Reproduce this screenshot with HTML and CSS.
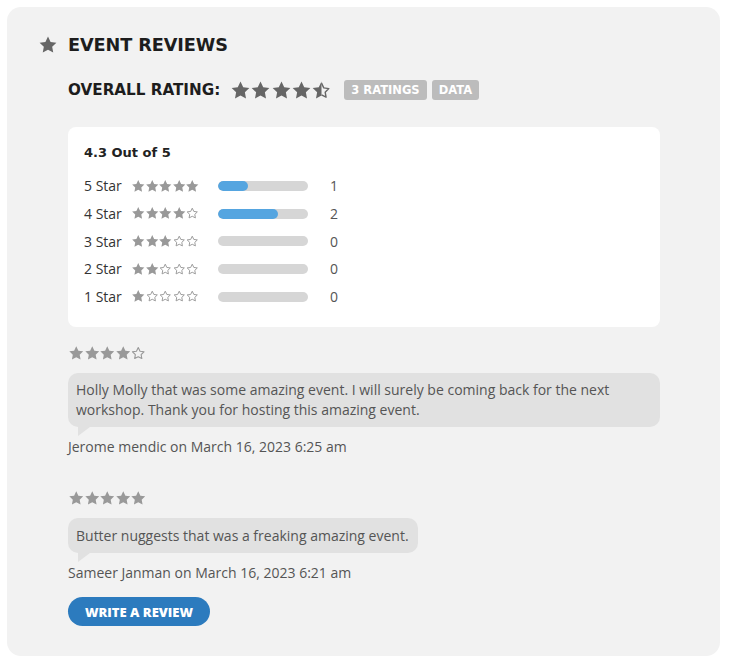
FILE: index.html
```html
<!DOCTYPE html>
<html lang="en">
<head>
  <meta charset="UTF-8" />
  <title>Event Reviews</title>
  <link rel="stylesheet" href="styles.css">
</head>
<body>
  <svg class="defs" width="0" height="0">
    <defs>
      <symbol id="star" viewBox="0 0 24 24">
        <path d="M12 1.8l3.1 6.5 7 .9-5.1 4.9 1.3 7L12 17.7l-6.3 3.4 1.3-7L1.9 9.2l7-.9z" stroke-linejoin="round"/>
      </symbol>
      <symbol id="star-o" viewBox="0 0 24 24">
        <path d="M12 3.6l2.6 5.4 5.8.8-4.2 4.1 1 5.8L12 17l-5.2 2.7 1-5.8-4.2-4.1 5.8-.8z" fill="none" stroke="currentColor" stroke-width="1.6" stroke-linejoin="round"/>
      </symbol>
      <symbol id="star-half" viewBox="0 0 24 24">
        <path d="M12 1.8v15.9l-6.3 3.4 1.3-7L1.9 9.2l7-.9z"/>
        <path d="M12 3.6l2.6 5.4 5.8.8-4.2 4.1 1 5.8L12 17" fill="none" stroke="currentColor" stroke-width="1.6" stroke-linejoin="round"/>
      </symbol>
    </defs>
  </svg>

  <div class="reviews-panel">
    <!-- Heading -->
    <div class="reviews-head">
      <svg class="head-icon"><use href="#star"/></svg>
      <h2>Event Reviews</h2>
    </div>

    <div class="reviews-body">
      <div class="overall">
        <span class="overall-label">Overall Rating:</span>
        <span class="stars stars-big">
          <svg><use href="#star"/></svg><svg><use href="#star"/></svg><svg><use href="#star"/></svg><svg><use href="#star"/></svg><svg><use href="#star-half"/></svg>
        </span>
        <span class="badge">3 Ratings</span>
        <span class="badge">Data</span>
      </div>

      <!-- Summary card -->
      <div class="summary-card">
        <div class="summary-title">4.3 Out of 5</div>
        <div class="summary-rows">
          <div class="summary-row">
            <span class="row-label">5 Star</span>
            <span class="stars stars-tiny"><svg><use href="#star"/></svg><svg><use href="#star"/></svg><svg><use href="#star"/></svg><svg><use href="#star"/></svg><svg><use href="#star"/></svg></span>
            <span class="bar"><span class="bar-fill" style="width: 33%"></span></span>
            <span class="row-count">1</span>
          </div>
          <div class="summary-row">
            <span class="row-label">4 Star</span>
            <span class="stars stars-tiny"><svg><use href="#star"/></svg><svg><use href="#star"/></svg><svg><use href="#star"/></svg><svg><use href="#star"/></svg><svg><use href="#star-o"/></svg></span>
            <span class="bar"><span class="bar-fill" style="width: 67%"></span></span>
            <span class="row-count">2</span>
          </div>
          <div class="summary-row">
            <span class="row-label">3 Star</span>
            <span class="stars stars-tiny"><svg><use href="#star"/></svg><svg><use href="#star"/></svg><svg><use href="#star"/></svg><svg><use href="#star-o"/></svg><svg><use href="#star-o"/></svg></span>
            <span class="bar"></span>
            <span class="row-count">0</span>
          </div>
          <div class="summary-row">
            <span class="row-label">2 Star</span>
            <span class="stars stars-tiny"><svg><use href="#star"/></svg><svg><use href="#star"/></svg><svg><use href="#star-o"/></svg><svg><use href="#star-o"/></svg><svg><use href="#star-o"/></svg></span>
            <span class="bar"></span>
            <span class="row-count">0</span>
          </div>
          <div class="summary-row">
            <span class="row-label">1 Star</span>
            <span class="stars stars-tiny"><svg><use href="#star"/></svg><svg><use href="#star-o"/></svg><svg><use href="#star-o"/></svg><svg><use href="#star-o"/></svg><svg><use href="#star-o"/></svg></span>
            <span class="bar"></span>
            <span class="row-count">0</span>
          </div>
        </div>
      </div>

      <!-- Reviews -->
      <div class="review">
        <span class="stars stars-small"><svg><use href="#star"/></svg><svg><use href="#star"/></svg><svg><use href="#star"/></svg><svg><use href="#star"/></svg><svg><use href="#star-o"/></svg></span>
        <div class="bubble">Holly Molly that was some amazing event. I will surely be coming back for the next workshop. Thank you for hosting this amazing event.</div>
        <div class="review-meta">Jerome mendic on March 16, 2023 6:25 am</div>
      </div>

      <div class="review">
        <span class="stars stars-small"><svg><use href="#star"/></svg><svg><use href="#star"/></svg><svg><use href="#star"/></svg><svg><use href="#star"/></svg><svg><use href="#star"/></svg></span>
        <div class="bubble">Butter nuggests that was a freaking amazing event.</div>
        <div class="review-meta">Sameer Janman on March 16, 2023 6:21 am</div>
      </div>

      <button class="write-btn">Write a Review</button>
    </div>
  </div>
</body>
</html>
```

FILE: styles.css
```css
body {
  margin: 0;
  background-color: #fff;
  font-family: 'Open Sans', sans-serif;
  color: #555;
}

.defs {
  position: absolute;
  width: 0;
  height: 0;
}

.reviews-panel {
  margin: 7px 0 0 7px;
  width: 713px;
  height: 649px;
  box-sizing: border-box;
  background-color: #f2f2f2;
  border-radius: 14px;
  padding: 26px 60px 0 31px;
}

.reviews-head {
  display: flex;
  align-items: center;
  height: 24px;
}

.head-icon {
  width: 20px;
  height: 20px;
  fill: #666;
  margin-right: 10px;
}

.reviews-head h2 {
  margin: 0;
  font-family: 'DejaVu Sans', sans-serif;
  font-weight: bold;
  font-size: 17.7px;
  letter-spacing: -0.1px;
  text-transform: uppercase;
  color: #1d1d1d;
}

.reviews-body {
  padding-left: 30px;
}

.overall {
  display: flex;
  align-items: center;
  margin-top: 21px;
  height: 24px;
}

.overall-label {
  font-family: 'DejaVu Sans', sans-serif;
  font-weight: bold;
  font-size: 15.2px;
  text-transform: uppercase;
  color: #1d1d1d;
  margin-right: 10px;
}

.stars {
  display: inline-flex;
  color: #999;
  fill: #999;
}

.stars-big {
  color: #666;
  fill: #666;
  margin-right: 13px;
}

.stars-big svg {
  width: 21px;
  height: 21px;
  margin-right: -0.8px;
}

.badge {
  background-color: #bcbcbc;
  color: #fff;
  font-family: 'DejaVu Sans', sans-serif;
  font-weight: bold;
  font-size: 11.5px;
  text-transform: uppercase;
  border-radius: 3px;
  height: 20px;
  line-height: 20px;
  padding: 0 7px;
  margin-right: 5px;
}

.summary-card {
  margin-top: 25px;
  background-color: #fff;
  border-radius: 8px;
  padding: 16px 16px 16px;
  height: 200px;
  box-sizing: border-box;
}

.summary-title {
  font-family: 'DejaVu Sans', sans-serif;
  font-weight: bold;
  font-size: 13px;
  line-height: 20px;
  color: #222;
}

.summary-rows {
  margin-top: 9px;
}

.summary-row {
  display: flex;
  align-items: center;
  height: 27.7px;
  font-size: 14px;
}

.row-label {
  width: 47px;
  color: #333;
}

.stars-tiny {
  width: 87px;
}

.stars-tiny svg {
  width: 14.5px;
  height: 14.5px;
  margin-right: -1px;
}

.bar {
  width: 90px;
  height: 10px;
  border-radius: 5px;
  background-color: #d6d6d6;
  overflow: hidden;
  margin-right: 22px;
}

.bar-fill {
  display: block;
  height: 100%;
  border-radius: 5px;
  background-color: #55a5e0;
}

.row-count {
  color: #555;
}

.review {
  margin-top: 17px;
}

.review + .review {
  margin-top: 32px;
}

.stars-small svg {
  width: 16.5px;
  height: 16.5px;
  margin-right: -0.9px;
}

.bubble {
  position: relative;
  width: fit-content;
  margin-top: 7px;
  background-color: #e1e1e1;
  border-radius: 10px;
  padding: 7px 9px 7px 8px;
  font-size: 14px;
  line-height: 20px;
  color: #555;
}

.review + .review .bubble {
  padding: 8px 9px 7px 8px;
}

.bubble::after {
  content: "";
  position: absolute;
  left: 10px;
  bottom: -9px;
  border-right: 12px solid transparent;
  border-top: 9px solid #e1e1e1;
}

.review-meta {
  margin-top: 10px;
  font-size: 14px;
  line-height: 20px;
  color: #555;
}

.write-btn {
  margin-top: 14px;
  width: 142px;
  height: 29px;
  border: none;
  border-radius: 15px;
  background-color: #2c7bbe;
  color: #fff;
  font-family: 'Open Sans', sans-serif;
  font-weight: 800;
  font-size: 13px;
  text-transform: uppercase;
  cursor: pointer;
}
```
